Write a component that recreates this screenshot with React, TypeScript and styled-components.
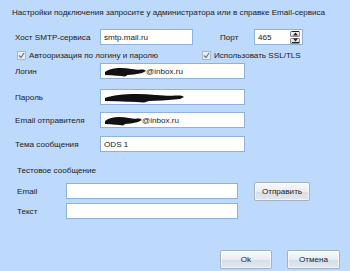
import { FC, ReactNode } from 'react';
import styled, { createGlobalStyle } from 'styled-components';

const GlobalStyle = createGlobalStyle`
  html, body {
    margin: 0;
    padding: 0;
    background: #bdd9fb;
  }
  body {
    font-family: 'Liberation Sans', Arial, sans-serif;
  }
`;

// scribble that hides the real account name
const Scribble: FC<{ width: number }> = ({ width }) => (
  <svg width={width} height={11} viewBox={`0 0 ${width} 11`} style={{ flex: 'none' }}>
    <path
      d={`M1 6 C ${width * 0.15} 2, ${width * 0.4} 1, ${width * 0.65} 3 S ${width - 4} 2, ${width} 5 L ${width - 4} 7 C ${width * 0.7} 9, ${width * 0.35} 10, 1 9 Z`}
      fill='#111'
    />
    <path d={`M${width * 0.2} 9 L ${width * 0.5} 10.5 L ${width * 0.6} 8 Z`} fill='#111' />
  </svg>
);

const CheckBox: FC = () => (
  <Box>
    <svg width='7' height='7' viewBox='0 0 7 7'>
      <path d='M1 3.5 L3 5.5 L6 1' stroke='#6d7686' strokeWidth='1.2' fill='none' />
    </svg>
  </Box>
);

const Spinner: FC = () => (
  <Spin>
    <SpinBtn>
      <svg width='7' height='5' viewBox='0 0 7 5'>
        <path d='M0 0.5 H7' stroke='#222' />
        <path d='M1 4.5 L3.5 1.5 L6 4.5 Z' fill='#222' />
      </svg>
    </SpinBtn>
    <SpinBtn>
      <svg width='7' height='5' viewBox='0 0 7 5'>
        <path d='M1 0.5 L3.5 3.5 L6 0.5 Z' fill='#222' />
        <path d='M0 4.5 H7' stroke='#222' />
      </svg>
    </SpinBtn>
  </Spin>
);

const Field: FC<{ label: string; children?: ReactNode; top: number }> = ({ label, children, top }) => (
  <Row $top={top}>
    <Label>{label}</Label>
    <Input $width={145}>{children}</Input>
  </Row>
);

const App: FC = () => {
  return (
    <>
      <GlobalStyle />
      <Window>
        <Header>Настройки подключения запросите у администратора или в справке Email-сервиса</Header>

        <Row $top={10}>
          <Label>Хост SMTP-сервиса</Label>
          <Input $width={93}>smtp.mail.ru</Input>
          <PortLabel>Порт</PortLabel>
          <Input $width={49}>
            465
            <Spinner />
          </Input>
        </Row>

        <CheckRow>
          <CheckItem $width={185}>
            <CheckBox />
            Автоoризация по логину и паролю
          </CheckItem>
          <CheckItem $width={120}>
            <CheckBox />
            Использовать SSL/TLS
          </CheckItem>
        </CheckRow>

        <Field label='Логин' top={2}>
          <Scribble width={42} />
          @inbox.ru
        </Field>
        <Field label='Пароль' top={10}>
          <Scribble width={80} />
        </Field>
        <Field label='Email отправителя' top={7}>
          <Scribble width={38} />
          @inbox.ru
        </Field>
        <Field label='Тема сообщения' top={8}>
          ODS 1
        </Field>

        <Section>Тестовое сообщение</Section>

        <TestRow $top={6}>
          <TestLabel>Email</TestLabel>
          <Input $width={172} />
          <Button $width={56}>Отправить</Button>
        </TestRow>
        <TestRow $top={4}>
          <TestLabel>Текст</TestLabel>
          <Input $width={172} />
        </TestRow>

        <Footer>
          <Button $width={52}>Ok</Button>
          <Button $width={53}>Отмена</Button>
        </Footer>
      </Window>
    </>
  );
};

export default App;

// Styled Components
const Window = styled.div`
  width: 350px;
  height: 271px;
  box-sizing: border-box;
  padding: 7px 0 0 15px;
  display: flex;
  flex-direction: column;
  color: #1b1b1b;
  font-size: 8.1px;
  overflow: hidden;
`;

const Header = styled.div`
  margin-left: -3px;
  height: 12px;
  line-height: 12px;
  white-space: nowrap;
`;

const Row = styled.div<{ $top: number }>`
  display: flex;
  align-items: center;
  height: 16px;
  margin-top: ${(p) => p.$top}px;
`;

const Label = styled.div`
  width: 85px;
  flex: none;
  white-space: nowrap;
`;

const PortLabel = styled.div`
  width: 34px;
  margin-left: 27px;
  flex: none;
`;

const Input = styled.div<{ $width: number }>`
  width: ${(p) => p.$width}px;
  height: 16px;
  box-sizing: border-box;
  flex: none;
  display: flex;
  align-items: center;
  padding: 0 0 0 3px;
  background: #ffffff;
  border: 1px solid #8eb1e0;
  white-space: nowrap;
  position: relative;
`;

const Spin = styled.div`
  margin-left: auto;
  margin-right: 2px;
  display: flex;
  flex-direction: column;
  gap: 1px;
`;

const SpinBtn = styled.div`
  width: 10px;
  height: 6px;
  display: flex;
  align-items: center;
  justify-content: center;
  background: linear-gradient(#f4f4f4, #d4d4d4);
  border: 1px solid #8e8e8e;
  box-sizing: border-box;
  border-radius: 1px;
`;

const CheckRow = styled.div`
  display: flex;
  align-items: center;
  height: 12px;
  margin-top: 4px;
  margin-left: 2px;
`;

const CheckItem = styled.label<{ $width: number }>`
  width: ${(p) => p.$width}px;
  display: flex;
  align-items: center;
  gap: 3px;
  white-space: nowrap;
`;

const Box = styled.span`
  width: 9px;
  height: 9px;
  box-sizing: border-box;
  border: 1px solid #a6b6cc;
  background: #e9eef5;
  display: flex;
  align-items: center;
  justify-content: center;
`;

const Section = styled.div`
  margin-top: 13px;
  margin-left: 2px;
  height: 12px;
  line-height: 12px;
`;

const TestRow = styled.div<{ $top: number }>`
  display: flex;
  align-items: center;
  height: 16px;
  margin-top: ${(p) => p.$top}px;
  margin-left: 2px;
`;

const TestLabel = styled.div`
  width: 49px;
  flex: none;
`;

const Button = styled.div<{ $width: number }>`
  width: ${(p) => p.$width}px;
  height: 19px;
  box-sizing: border-box;
  margin-left: 16px;
  flex: none;
  display: flex;
  align-items: center;
  justify-content: center;
  border: 1px solid #a4b1c2;
  border-radius: 2px;
  background: linear-gradient(#f7f9fc 0%, #e8edf3 50%, #d6dde7 51%, #e3e8ef 100%);
  box-shadow: inset 0 0 0 1px rgba(255, 255, 255, 0.6);
`;

const Footer = styled.div`
  display: flex;
  justify-content: flex-end;
  margin-top: auto;
  margin-bottom: 2px;
  padding-right: 10px;
  & > div:first-child {
    margin-left: 0;
  }
  & > div + div {
    margin-left: 15px;
  }
`;
